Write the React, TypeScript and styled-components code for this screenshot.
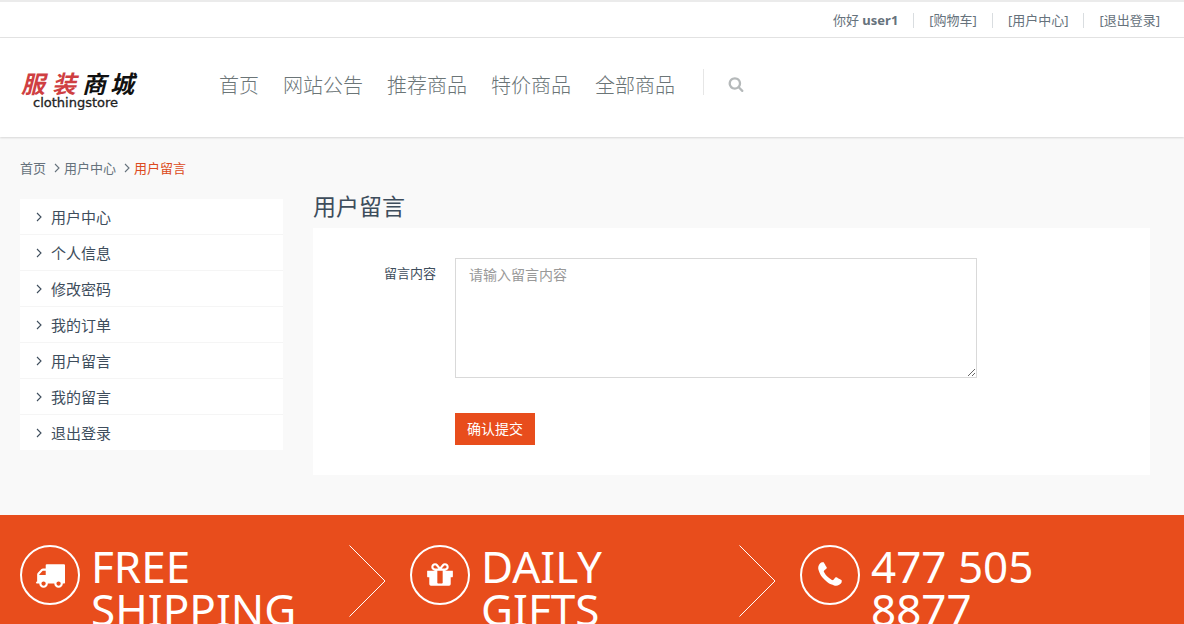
import React from 'react';
import styled, { createGlobalStyle } from 'styled-components';

const GlobalStyle = createGlobalStyle`
  * { box-sizing: border-box; }
  body {
    margin: 0;
    background: #f9f9f9;
    color: #3e4d5c;
    font-family: "Noto Sans", "Noto Sans CJK SC", sans-serif;
    font-size: 13px;
    font-weight: 400;
    line-height: 20px;
  }
  a { color: inherit; text-decoration: none; }
  ul, ol { list-style: none; margin: 0; padding: 0; }
  h1, h2 { margin: 0; font-weight: 400; }
`;

const TopBar = styled.div`
  background: #fff;
  border-top: 2px solid #ebebeb;
  border-bottom: 1px solid #e4e4e4;
  padding: 8px 24px 7px;
`;

const TopList = styled.ul`
  display: flex;
  justify-content: flex-end;
  align-items: center;
  color: #66727c;
`;

const TopItem = styled.li`
  display: flex;
  align-items: center;
  white-space: pre;

  & + &::before {
    content: "";
    width: 1px;
    height: 15px;
    margin: 0 15px;
    background: #d9dde0;
  }

  strong { font-weight: 700; }
`;

const Header = styled.header`
  position: relative;
  display: flex;
  align-items: center;
  height: 99px;
  padding: 0 20px;
  background: #fff;
  box-shadow: 0 1px 2px rgba(0, 0, 0, 0.14);
`;

const LogoLink = styled.a`
  flex: 0 0 199px;
  display: block;
  height: 44px;

  svg { display: block; }
`;

const Nav = styled.nav`
  display: flex;
  align-items: center;
  padding-bottom: 4px;

  ul { display: flex; gap: 24px; }
`;

const NavLink = styled.a`
  color: #6b7577;
  font-size: 20px;
  font-weight: 300;
  line-height: 28px;
`;

const SearchButton = styled.button`
  display: flex;
  align-items: center;
  height: 26px;
  margin: 0 0 8px 28px;
  padding: 4px 0 0 24px;
  border: 0;
  border-left: 1px solid #e6e6e6;
  background: none;
  color: #b5b9ba;
`;

const Main = styled.main`
  max-width: 1170px;
  padding: 21px 20px 40px;
`;

const Breadcrumb = styled.ol`
  display: flex;
  align-items: center;
  margin-bottom: 14px;
  color: #66727c;
`;

const Crumb = styled.li<{ $active?: boolean }>`
  display: flex;
  align-items: center;
  color: ${(p) => (p.$active ? '#dc4a20' : 'inherit')};

  svg { margin: 0 4px 0 8px; color: #66727c; }
`;

const Columns = styled.div`
  display: flex;
  align-items: flex-start;
  gap: 30px;
`;

const SideMenu = styled.ul`
  flex: 0 0 263px;
  margin-top: 7px;
  background: #fff;
`;

const SideItem = styled.li`
  & + & { border-top: 1px solid #f5f5f5; }

  a {
    display: flex;
    align-items: center;
    gap: 9px;
    height: 35px;
    padding-left: 16px;
    font-size: 15px;
  }
`;

const Content = styled.section`
  flex: 1;
  min-width: 0;
`;

const Title = styled.h1`
  font-size: 23px;
  line-height: 28px;
  margin-bottom: 8px;
`;

const Form = styled.form`
  padding: 30px 15px;
  background: #fff;
`;

const Field = styled.div`
  display: grid;
  grid-template-columns: 108px minmax(0, 522px);
  column-gap: 19px;
  margin-bottom: 35px;
`;

const Label = styled.label`
  padding-top: 5px;
  text-align: right;
`;

const TextArea = styled.textarea`
  display: block;
  width: 100%;
  height: 120px;
  padding: 6px 13px;
  border: 1px solid #d9d9d9;
  border-radius: 0;
  font: inherit;
  font-size: 14px;
  resize: both;

  &::placeholder { color: #999; }
`;

const SubmitButton = styled.button`
  display: block;
  height: 32px;
  margin-left: 127px;
  padding: 0 12px;
  border: 0;
  background: #e84d1c;
  color: #fff;
  font: inherit;
  font-size: 14px;
`;

const Promo = styled.section`
  background: #e84d1c;
  color: #fff;
  overflow: hidden;
`;

const PromoRow = styled.div`
  display: flex;
  max-width: 1170px;
`;

const PromoItem = styled.div`
  flex: 1;
  display: grid;
  grid-template-columns: 60px 1fr 37px;
  column-gap: 11px;
  padding: 30px 4px 30px 20px;
`;

const PromoIcon = styled.span`
  display: flex;
  align-items: center;
  justify-content: center;
  width: 60px;
  height: 60px;
  border: 2px solid #fff;
  border-radius: 50%;
`;

const PromoTitle = styled.h2`
  font-size: 44px;
  line-height: 43px;
`;

const icons = {
  search:
    'M1216 832q0-185-131.5-316.5t-316.5-131.5-316.5 131.5-131.5 316.5 131.5 316.5 316.5 131.5 316.5-131.5 131.5-316.5zm512 832q0 52-38 90t-90 38q-54 0-90-38l-343-342q-179 124-399 124-143 0-273.5-55.5t-225-150-150-225-55.5-273.5 55.5-273.5 150-225 225-150 273.5-55.5 273.5 55.5 225 150 150 225 55.5 273.5q0 220-124 399l343 343q37 37 37 90z',
  truck:
    'M640 1408q0-52-38-90t-90-38-90 38-38 90 38 90 90 38 90-38 38-90zm-384-512h384v-256h-158q-13 0-22 9l-195 195q-9 9-9 22v30zm1280 512q0-52-38-90t-90-38-90 38-38 90 38 90 90 38 90-38 38-90zm256-1088v1024q0 15-4 26.5t-13.5 18.5-16.5 11.5-23.5 6-22.5 2-25.5 0-22.5-.5q0 106-75 181t-181 75-181-75-75-181h-384q0 106-75 181t-181 75-181-75-75-181h-64q-3 0-22.5.5t-25.5 0-22.5-2-23.5-6-16.5-11.5-13.5-18.5-4-26.5q0-26 19-45t45-19v-320q0-8-.5-35t0-38 2.5-34.5 6.5-37 14-30.5 22.5-30l198-198q19-19 50.5-32t58.5-13h160v-192q0-26 19-45t45-19h1024q26 0 45 19t19 45z',
  gift:
    'M1056 1356v-716h-320v716q0 25 18 38.5t46 13.5h192q28 0 46-13.5t18-38.5zm-456-844h195l-126-161q-26-31-69-31-40 0-68 28t-28 68 28 68 68 28zm688-96q0-40-28-68t-68-28q-43 0-69 31l-125 161h194q40 0 68-28t28-68zm376 256v320q0 14-9 23t-23 9h-96v416q0 40-28 68t-68 28h-1088q-40 0-68-28t-28-68v-416h-96q-14 0-23-9t-9-23v-320q0-14 9-23t23-9h440q-93 0-158.5-65.5t-65.5-158.5 65.5-158.5 158.5-65.5q107 0 168 77l128 165 128-165q61-77 168-77 93 0 158.5 65.5t65.5 158.5-65.5 158.5-158.5 65.5h440q14 0 23 9t9 23z',
  phone:
    'M1600 1240q0 27-10 70.5t-21 68.5q-21 50-122 106-94 51-186 51-27 0-53-3.5t-57.5-12.5-47-14.5-55.5-20.5-49-18q-98-35-175-83-127-79-264-216t-216-264q-48-77-83-175-3-9-18-49t-20.5-55.5-14.5-47-12.5-57.5-3.5-53q0-92 51-186 56-101 106-122 25-11 68.5-21t70.5-10q14 0 21 3 18 6 53 76 11 19 30 54t35 63.5 31 53.5q3 4 17.5 25t21.5 35.5 7 28.5q0 20-28.5 50t-62 55-62 53-28.5 46q0 9 5 22.5t8.5 20.5 14 24 11.5 19q76 137 174 235t235 174q2 1 19 11.5t24 14 20.5 8.5 22.5 5q18 0 46-28.5t53-62 55-62 50-28.5q14 0 28.5 7t35.5 21.5 25 17.5q25 15 53.5 31t63.5 35 54 30q70 35 76 53 3 7 3 21z',
};

const Icon = ({ name, size }: { name: keyof typeof icons; size: number }) => (
  <svg width={size} height={size} viewBox="0 0 1792 1792" fill="currentColor" aria-hidden="true">
    <path d={icons[name]} />
  </svg>
);

const Chevron = () => (
  <svg width="6" height="10" viewBox="0 0 6 10" fill="none" stroke="currentColor" strokeWidth="1.1" aria-hidden="true">
    <path d="M1 1l4 4-4 4" />
  </svg>
);

const PromoArrow = () => (
  <svg width="37" height="72" viewBox="0 0 37 72" fill="none" stroke="#fff" strokeWidth="1" aria-hidden="true">
    <path d="M.5 .5L36 36L.5 71.5" />
  </svg>
);

const Logo = () => (
  <svg width="120" height="44" viewBox="0 0 120 44" role="img" aria-label="服装商城 clothingstore">
    <g fontFamily="'Noto Sans CJK SC', sans-serif" fontSize="24" fontWeight="700" fontStyle="italic">
      <text x="1" y="27" fill="#cf3f42">服</text>
      <text x="32" y="27" fill="#cf3f42">装</text>
      <text x="62" y="27" fill="#111">商</text>
      <text x="90" y="27" fill="#111">城</text>
    </g>
    <text x="13" y="41" fill="#222" stroke="#222" strokeWidth="0.3" fontFamily="'DejaVu Sans', sans-serif" fontSize="13">
      clothingstore
    </text>
  </svg>
);

const topLinks = ['[购物车]', '[用户中心]', '[退出登录]'];
const navLinks = ['首页', '网站公告', '推荐商品', '特价商品', '全部商品'];
const sideLinks = ['用户中心', '个人信息', '修改密码', '我的订单', '用户留言', '我的留言', '退出登录'];
const promos: { icon: keyof typeof icons; title: string }[] = [
  { icon: 'truck', title: 'FREE SHIPPING' },
  { icon: 'gift', title: 'DAILY GIFTS' },
  { icon: 'phone', title: '477 505 8877' },
];

export default function App() {
  return (
    <>
      <GlobalStyle />
      <TopBar>
        <TopList>
          <TopItem>
            你好 <strong>user1</strong>
          </TopItem>
          {topLinks.map((text) => (
            <TopItem key={text}>
              <a href="#">{text}</a>
            </TopItem>
          ))}
        </TopList>
      </TopBar>

      <Header>
        <LogoLink href="#">
          <Logo />
        </LogoLink>
        <Nav>
          <ul>
            {navLinks.map((text) => (
              <li key={text}>
                <NavLink href="#">{text}</NavLink>
              </li>
            ))}
          </ul>
          <SearchButton type="button" aria-label="搜索">
            <Icon name="search" size={16} />
          </SearchButton>
        </Nav>
      </Header>

      <Main>
        <Breadcrumb>
          <Crumb>
            <a href="#">首页</a>
          </Crumb>
          <Crumb>
            <Chevron />
            <a href="#">用户中心</a>
          </Crumb>
          <Crumb $active>
            <Chevron />
            用户留言
          </Crumb>
        </Breadcrumb>

        <Columns>
          <SideMenu>
            {sideLinks.map((text) => (
              <SideItem key={text}>
                <a href="#">
                  <Chevron />
                  {text}
                </a>
              </SideItem>
            ))}
          </SideMenu>

          <Content>
            <Title>用户留言</Title>
            <Form onSubmit={(e) => e.preventDefault()}>
              <Field>
                <Label htmlFor="message">留言内容</Label>
                <TextArea id="message" placeholder="请输入留言内容" />
              </Field>
              <SubmitButton type="submit">确认提交</SubmitButton>
            </Form>
          </Content>
        </Columns>
      </Main>

      <Promo>
        <PromoRow>
          {promos.map(({ icon, title }, i) => (
            <PromoItem key={title}>
              <PromoIcon>
                <Icon name={icon} size={30} />
              </PromoIcon>
              <PromoTitle>{title}</PromoTitle>
              {i < promos.length - 1 && <PromoArrow />}
            </PromoItem>
          ))}
        </PromoRow>
      </Promo>
    </>
  );
}
